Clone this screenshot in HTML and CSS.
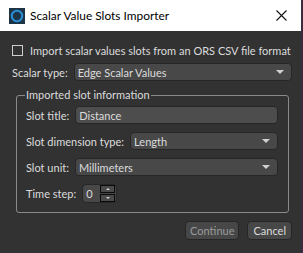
FILE: index.html
```html
<!DOCTYPE html>
<html lang="en">
  <head>
    <title>Scalar Value Slots Importer</title>
    <meta charset="utf-8" />
    <link rel="stylesheet" href="styles.css">
  </head>
  <body>
    <div class="dlg">
      <div class="dlg__titlebar">
        <svg class="dlg__icon" width="16" height="16" viewBox="0 0 16 16">
          <rect width="16" height="16" fill="#1d3346"/>
          <circle cx="8" cy="8" r="5.2" fill="none" stroke="#2a8fd6" stroke-width="2"/>
        </svg>
        <span class="dlg__title">Scalar Value Slots Importer</span>
        <svg class="dlg__close" width="11" height="11" viewBox="0 0 11 11">
          <path d="M0.5 0.5 L10.5 10.5 M10.5 0.5 L0.5 10.5" stroke="#111" stroke-width="1.1"/>
        </svg>
      </div>

      <div class="dlg__body">
        <label class="row row--check">
          <span class="check"></span>
          Import scalar values slots from an ORS CSV file format
        </label>

        <div class="row row--scalar">
          <span class="lbl">Scalar type:</span>
          <div class="combo combo--grow">Edge Scalar Values<i class="combo__arrow"></i></div>
        </div>

        <fieldset class="group">
          <legend class="group__title">Imported slot information</legend>

          <div class="row">
            <span class="lbl">Slot title:</span>
            <div class="field">Distance</div>
          </div>
          <div class="row">
            <span class="lbl">Slot dimension type:</span>
            <div class="combo combo--grow">Length<i class="combo__arrow"></i></div>
          </div>
          <div class="row">
            <span class="lbl">Slot unit:</span>
            <div class="combo combo--grow">Millimeters<i class="combo__arrow"></i></div>
          </div>
          <div class="row row--last">
            <span class="lbl">Time step:</span>
            <div class="spin">
              <span class="spin__val">0</span>
              <span class="spin__btns">
                <span class="spin__btn"><i class="tri tri--up"></i></span>
                <span class="spin__btn"><i class="tri tri--down"></i></span>
              </span>
            </div>
          </div>
        </fieldset>

        <div class="dlg__buttons">
          <div class="btn btn--off">Continue</div>
          <div class="btn">Cancel</div>
        </div>
      </div>
    </div>
  </body>
</html>
```

FILE: styles.css
```css
html, body {
  margin: 0;
  background: #3a2c3e;
}

body, div, span, label, legend {
  font-family: Lato, "Open Sans", sans-serif;
  font-size: 11px;
  color: #dcdcdc;
  white-space: nowrap;
}

.dlg {
  width: 301px;
  height: 253px;
  background: #323232;
  display: flex;
  flex-direction: column;
}

.dlg__titlebar {
  height: 31px;
  flex: none;
  background: #ffffff;
  display: flex;
  align-items: center;
  padding-left: 9px;
  padding-right: 14px;
}

.dlg__title {
  color: #000;
  font-size: 11.9px;
  margin-left: 5px;
  flex: 1;
}

.dlg__body {
  padding: 10px 9px 0 12px;
}

.row {
  display: flex;
  align-items: center;
  height: 18px;
  margin-bottom: 8px;
}

.row--check {
  margin-bottom: 4px;
}

.row--scalar {
  margin-bottom: 7px;
}

.lbl {
  margin-right: 6px;
}

.check {
  flex: none;
  display: inline-block;
  width: 9px;
  height: 9px;
  border: 1px solid #cfcfcf;
  margin-right: 7px;
}

.combo, .field, .spin {
  height: 18px;
  box-sizing: border-box;
  border: 1px solid #262626;
  border-radius: 4px;
  background: #484848;
  display: flex;
  align-items: center;
  padding-left: 3px;
  position: relative;
}

.combo--grow, .field {
  flex: 1;
}

.field {
  background: #4d4d4d;
}

.combo__arrow {
  position: absolute;
  right: 7px;
  top: 6px;
  border-left: 4px solid transparent;
  border-right: 4px solid transparent;
  border-top: 4px solid #d0d0d0;
}

.group {
  margin: 0 3px 0 4px;
  padding: 4px 10px 9px 9px;
  border: 1px solid #8a8a8a;
  border-radius: 3px;
}

.group__title {
  padding: 0 1px;
  margin-left: -1px;
  line-height: 14px;
}

.row--last {
  margin-bottom: 0;
  height: 19px;
}

.spin {
  width: 35px;
  height: 19px;
  padding-left: 3px;
  justify-content: space-between;
  padding-right: 1px;
}

.spin__btns {
  display: flex;
  flex-direction: column;
  gap: 1px;
}

.spin__btn {
  width: 13px;
  height: 6px;
  border: 1px solid #0a0a0a;
  background: #4a4a4a;
  display: flex;
  align-items: center;
  justify-content: center;
}

.tri {
  border-left: 2px solid transparent;
  border-right: 2px solid transparent;
}

.tri--up {
  border-bottom: 2px solid #d0d0d0;
}

.tri--down {
  border-top: 2px solid #d0d0d0;
}

.dlg__buttons {
  display: flex;
  justify-content: flex-end;
  gap: 8px;
  margin-top: 8px;
}

.btn {
  height: 19px;
  box-sizing: border-box;
  padding: 0 5px;
  border: 1px solid #262626;
  border-radius: 4px;
  background: #474747;
  display: flex;
  align-items: center;
}

.btn--off {
  color: #9a9a9a;
  padding: 0 4px;
}
```
